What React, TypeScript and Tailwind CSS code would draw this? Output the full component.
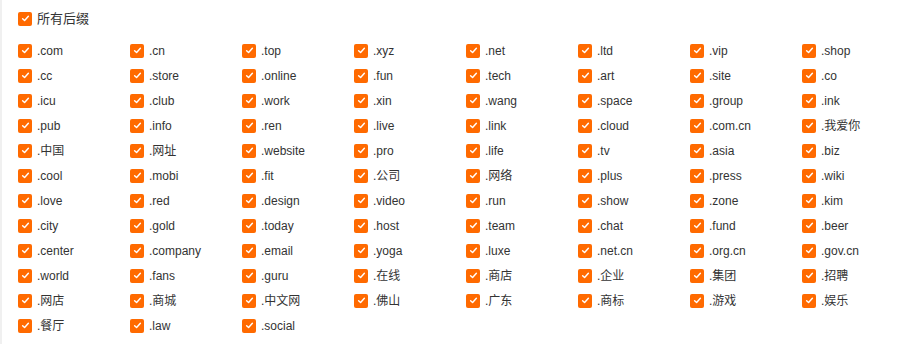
const suffixes = [
  '.com', '.cn', '.top', '.xyz', '.net', '.ltd', '.vip', '.shop',
  '.cc', '.store', '.online', '.fun', '.tech', '.art', '.site', '.co',
  '.icu', '.club', '.work', '.xin', '.wang', '.space', '.group', '.ink',
  '.pub', '.info', '.ren', '.live', '.link', '.cloud', '.com.cn', '.我爱你',
  '.中国', '.网址', '.website', '.pro', '.life', '.tv', '.asia', '.biz',
  '.cool', '.mobi', '.fit', '.公司', '.网络', '.plus', '.press', '.wiki',
  '.love', '.red', '.design', '.video', '.run', '.show', '.zone', '.kim',
  '.city', '.gold', '.today', '.host', '.team', '.chat', '.fund', '.beer',
  '.center', '.company', '.email', '.yoga', '.luxe', '.net.cn', '.org.cn', '.gov.cn',
  '.world', '.fans', '.guru', '.在线', '.商店', '.企业', '.集团', '.招聘',
  '.网店', '.商城', '.中文网', '.佛山', '.广东', '.商标', '.游戏', '.娱乐',
  '.餐厅', '.law', '.social',
];

function Check() {
  return (
    <span className="w-[14px] h-[14px] rounded-[2px] bg-[#ff6a00] flex items-center justify-center shrink-0">
      <svg width="9" height="9" viewBox="0 0 10 10" fill="none">
        <path d="M1.8 5.2 L4 7.3 L8.2 2.6" stroke="#fff" strokeWidth="1.6" strokeLinecap="round" strokeLinejoin="round" />
      </svg>
    </span>
  );
}

export default function App() {
  return (
    <div
      className="w-[924px] h-[344px] bg-white border-l-2 border-[#f0f0f0] pt-[6px] pl-[16px] text-[12px] text-[#333]"
      style={{ fontFamily: '"Liberation Sans", Arial, "Noto Sans CJK SC", sans-serif' }}
    >
      <label className="flex items-center h-[25px] gap-[5px]">
        <Check />
        <span className="text-[13px]">所有后缀</span>
      </label>

      <div className="mt-[7px] grid grid-cols-[repeat(8,112px)]">
        {suffixes.map((s) => (
          <label key={s} className="flex items-center h-[25px] gap-[5px]">
            <Check />
            <span>{s}</span>
          </label>
        ))}
      </div>
    </div>
  );
}
